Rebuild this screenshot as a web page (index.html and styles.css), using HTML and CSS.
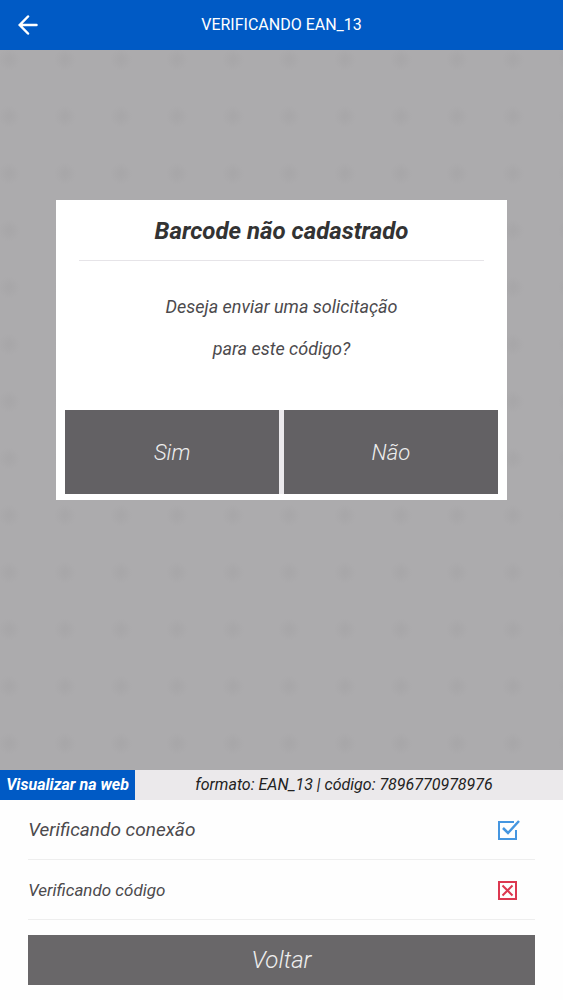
FILE: index.html
```html
<!DOCTYPE html>
<html lang="pt-BR">
<head>
<meta charset="utf-8">
<meta name="viewport" content="width=device-width, initial-scale=1">
<title>Verificando EAN_13</title>
<link rel="stylesheet" href="styles.css">
</head>
<body>

<header class="topbar">
	<button type="button" class="back" aria-label="Voltar">
		<svg width="20" height="20" viewBox="0 0 20 20" fill="none" stroke="#fff" stroke-width="2.5" stroke-linecap="round"><path d="M18.500 10H2M10 1.500L1.700 10l8.300 8.500"/></svg>
	</button>
	<h1>VERIFICANDO EAN_13</h1>
</header>

<main class="scene">
	<div class="dialog" role="dialog" aria-labelledby="dialogTitle">
		<h2 id="dialogTitle">Barcode não cadastrado</h2>
		<p>Deseja enviar uma solicitação<br>para este código?</p>
		<div class="actions">
			<button type="button">Sim</button>
			<button type="button">Não</button>
		</div>
	</div>
</main>

<div class="info">
	<a href="#">Visualizar na web</a>
	<span>formato: EAN_13 | código: 7896770978976</span>
</div>

<footer class="checks">
	<ul>
		<li class="large">Verificando conexão
			<svg width="22" height="20" viewBox="0 0 22 20" fill="none" stroke="#4596e0" stroke-width="2"><path d="M16 2H1v17h17V10"/><path d="M5 8l5 5L21 1" stroke-width="2.5"/></svg>
		</li>
		<li>Verificando código
			<svg width="22" height="20" viewBox="0 0 22 20" fill="none" stroke="#dc3850" stroke-width="2"><path d="M1 2h17v17H1z"/><path d="M4.500 5.500l10 10M14.500 5.500l-10 10"/></svg>
		</li>
	</ul>
	<button type="button" class="voltar">Voltar</button>
</footer>

</body>
</html>
```

FILE: styles.css
```css
*{
	box-sizing: border-box;
}
body{
	margin: 0;
	min-height: 100vh;
	display: flex;
	flex-direction: column;
	font: italic 18px Roboto, "Liberation Sans", sans-serif;
	color: #4c4a4d;
	background: #fefefe;
}
h1, h2, p, ul{
	margin: 0;
	padding: 0;
}
button{
	border: 0;
	padding: 0;
	font: inherit;
	cursor: pointer;
}

/* top bar */
.topbar{
	display: grid;
	grid-template-columns: 56px 1fr 56px;
	align-items: center;
	height: 50px;
	background: #005ac5;
	color: #fff;
}
.topbar h1{
	font: 16px Roboto, "Liberation Sans", sans-serif;
	line-height: 24px;
	text-align: center;
}
.back{
	display: flex;
	justify-content: center;
	background: none;
}

/* dimmed dotted background */
.scene{
	flex: 1;
	padding: 150px 10% 0;
	background-color: #acabad;
	background-image: radial-gradient(circle, #a8a7a9 2px, #acabad 11px);
	background-size: 56px 57px;
	background-position: -19px 38px;
}
.dialog{
	padding: 0 9px 6px;
	background: #fff;
	text-align: center;
}
.dialog h2{
	margin: 0 14px;
	padding-top: 2px;
	border-bottom: 1px solid #e6e4e8;
	font-size: 24px;
	line-height: 58px;
	color: #333;
}
.dialog p{
	padding: 25px 0 40px;
	line-height: 42px;
}
.actions{
	display: grid;
	grid-template-columns: 1fr 1fr;
	gap: 5px;
	background: #ebe9ec;
}
.actions button{
	height: 84px;
	background: #636164;
	color: #eee;
	font-size: 22px;
	font-weight: 300;
}

/* scanned code */
.info{
	display: flex;
	background: #ebe9eb;
	font-size: 16px;
	line-height: 30px;
	color: #222;
}
.info a{
	width: 24%;
	min-width: 135px;
	background: #005ac5;
	color: #fff;
	font-weight: bold;
	text-align: center;
	text-decoration: none;
	white-space: nowrap;
}
.info span{
	flex: 1;
	padding-right: 10px;
	text-align: center;
}

/* check list */
.checks{
	padding: 0 5% 15px;
}
.checks li{
	display: flex;
	justify-content: space-between;
	align-items: center;
	height: 60px;
	padding-right: 15px;
	border-bottom: 1px solid #eee;
	font-size: 17px;
}
.checks li.large{
	font-size: 19px;
}
.voltar{
	display: block;
	width: 100%;
	height: 50px;
	margin-top: 15px;
	background: #696769;
	color: #eee;
	font-size: 24px;
	font-weight: 300;
}
```
